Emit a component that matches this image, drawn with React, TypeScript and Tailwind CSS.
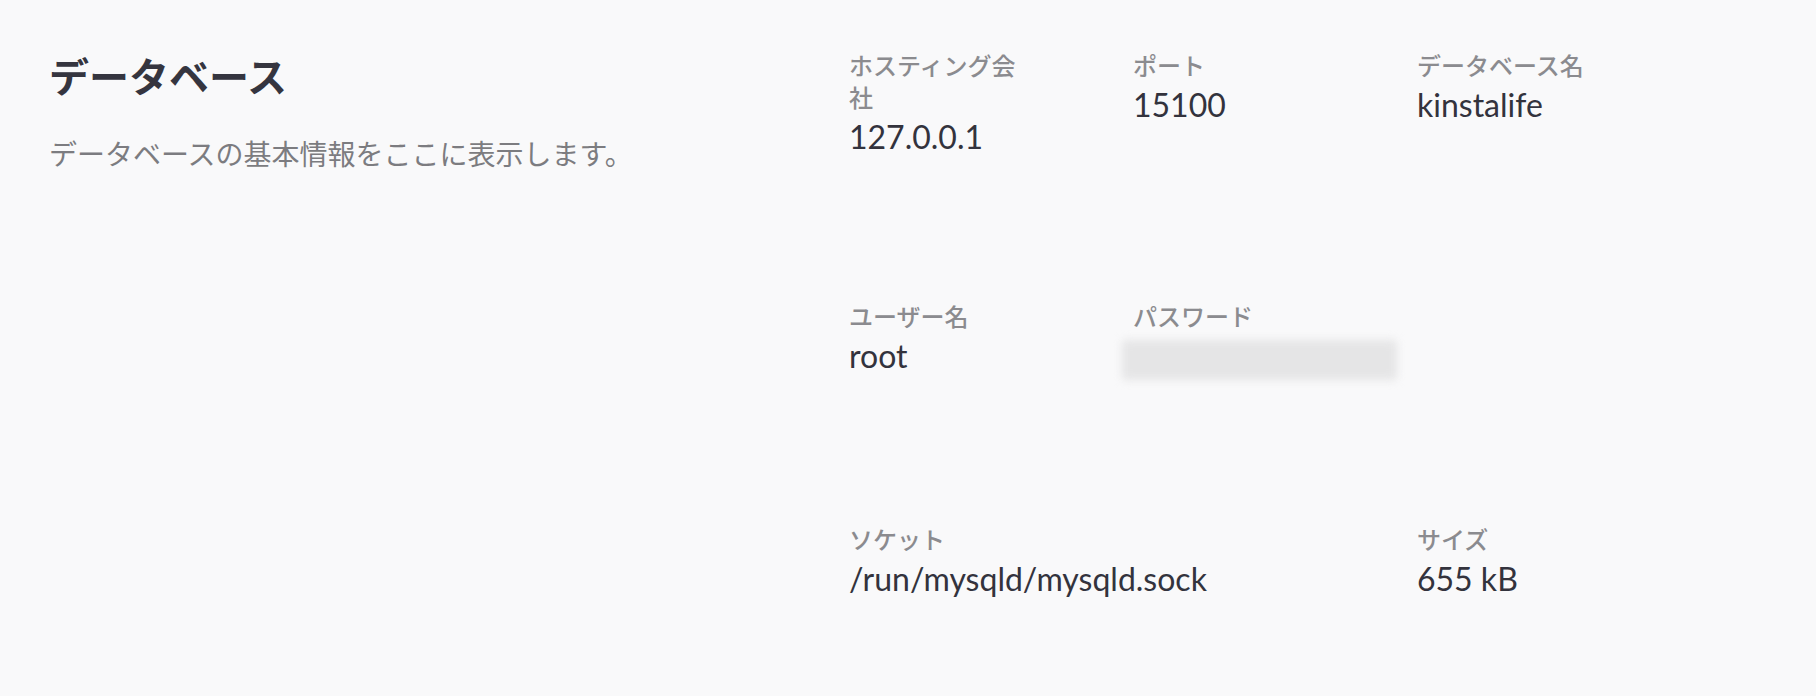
import type { ReactNode } from 'react';

interface FieldProps {
  label: string;
  children: ReactNode;
  className?: string;
}

function Field({ label, children, className = '' }: FieldProps) {
  return (
    <div className={className}>
      <dt className="text-[24px] leading-[32px] font-medium text-[#8b8b8f]">{label}</dt>
      <dd className="mt-[3px] text-[32px] leading-[40px] text-[#33333d]">{children}</dd>
    </div>
  );
}

export default function App() {
  return (
    <div className="min-h-screen bg-[#f9f9fa] font-['Lato','Noto_Sans_CJK_JP',sans-serif]">
      <section className="flex pl-[49px] pt-[49px]" aria-label="Database">
        <div className="w-[800px] shrink-0 pt-[4px]">
          <h2 className="text-[40px] leading-[48px] font-bold text-[#35353f]">データベース</h2>
          <p className="mt-[33px] text-[28px] leading-[40px] text-[#7c7c80]">
            データベースの基本情報をここに表示します。
          </p>
        </div>

        <dl className="grid grid-cols-[184px_184px_184px] gap-x-[100px] gap-y-[144px] pt-[1px]">
          <Field label="ホスティング会社">127.0.0.1</Field>
          <Field label="ポート">15100</Field>
          <Field label="データベース名">kinstalife</Field>

          <Field label="ユーザー名">root</Field>
          <Field label="パスワード">
            {/* password is hidden behind a soft blur */}
            <div className="h-[40px]">
              <div className="-ml-[11px] mt-[7px] h-[40px] w-[275px] rounded bg-[#e5e5e6] blur-[4px]" />
            </div>
          </Field>
          <div />

          <Field label="ソケット" className="col-span-2">
            /run/mysqld/mysqld.sock
          </Field>
          <Field label="サイズ">655 kB</Field>
        </dl>
      </section>
    </div>
  );
}
